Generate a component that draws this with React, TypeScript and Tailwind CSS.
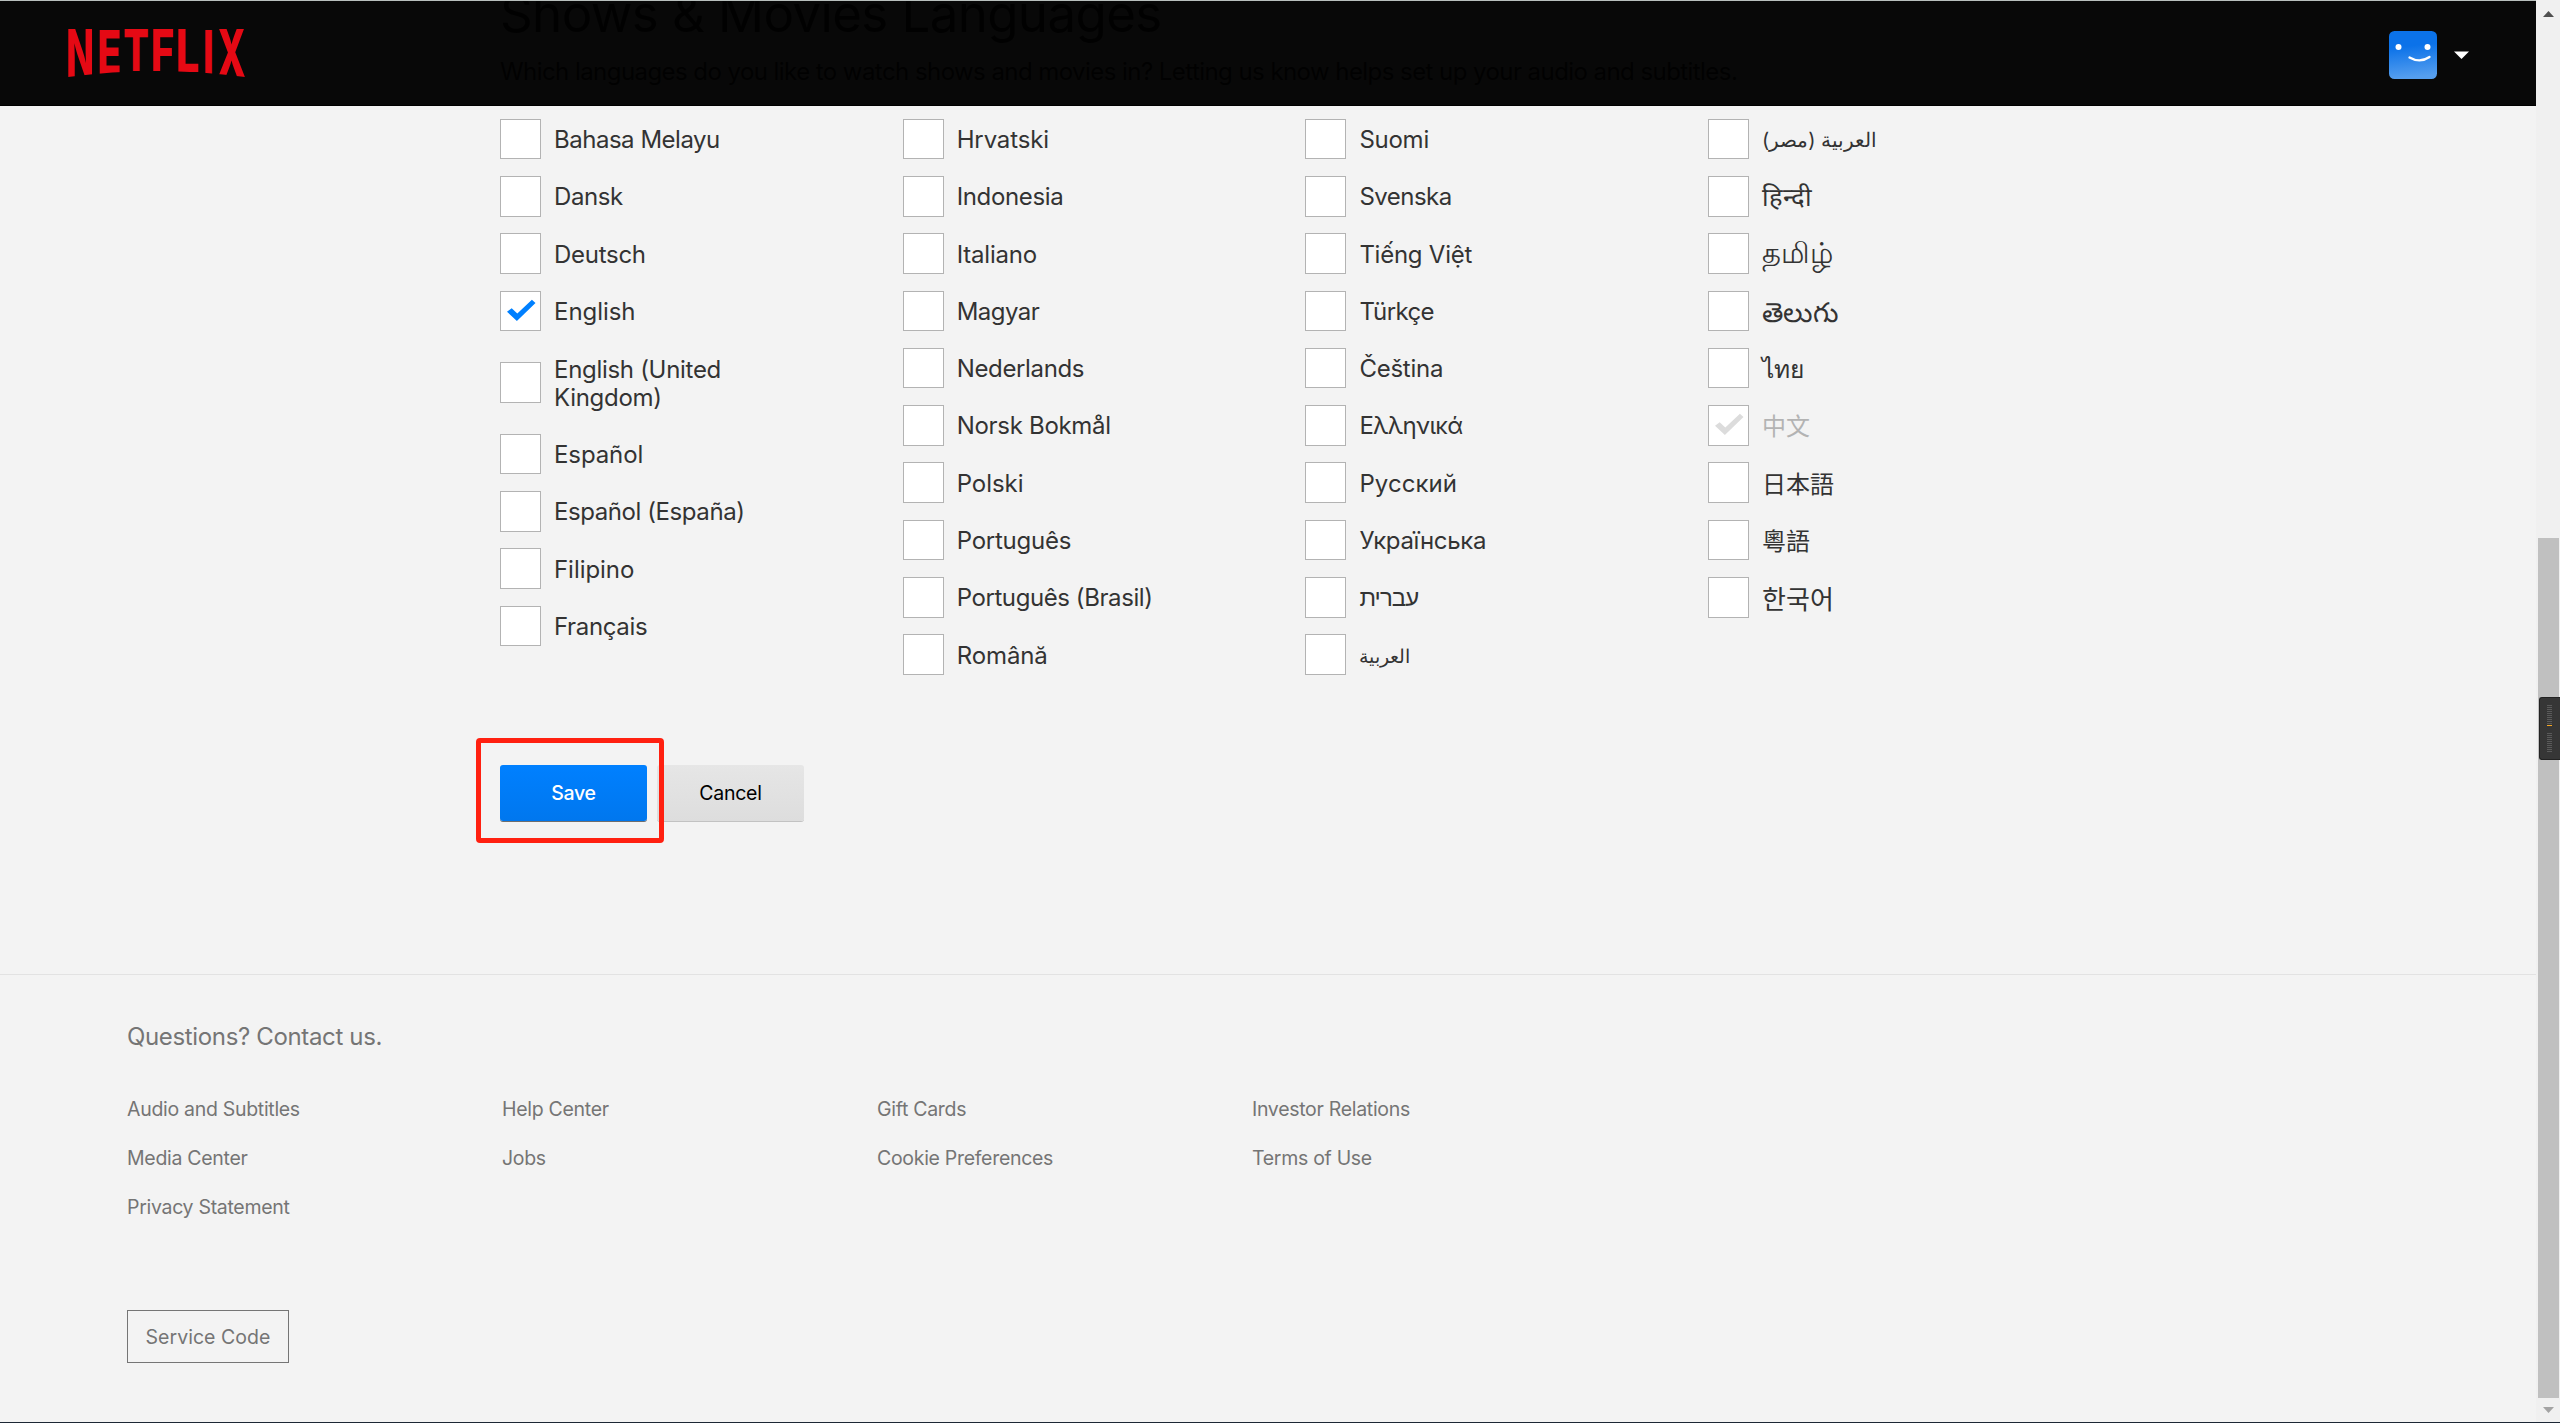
import React from 'react'

type Lang = { name: string; cls?: string; state?: 'checked' | 'disabled'; tall?: boolean; rtl?: boolean }

const columns: Lang[][] = [
  [
    { name: 'Bahasa Melayu', cls: 'tracking-[-0.48px]' },
    { name: 'Dansk', cls: 'tracking-[-0.4px]' },
    { name: 'Deutsch', cls: 'tracking-[-0.28px]' },
    { name: 'English', cls: 'tracking-[-0.05px]', state: 'checked' },
    { name: 'English (United Kingdom)', cls: 'tracking-[-0.3px]', tall: true },
    { name: 'Español', cls: 'tracking-[-0.1px]' },
    { name: 'Español (España)', cls: 'tracking-[-0.42px]' },
    { name: 'Filipino', cls: 'tracking-[-0.05px]' },
    { name: 'Français', cls: 'tracking-[-0.35px]' },
  ],
  [
    { name: 'Hrvatski', cls: 'tracking-[-0.15px]' },
    { name: 'Indonesia', cls: 'tracking-[-0.35px]' },
    { name: 'Italiano', cls: 'tracking-[-0.2px]' },
    { name: 'Magyar', cls: 'tracking-[-0.55px]' },
    { name: 'Nederlands', cls: 'tracking-[-0.35px]' },
    { name: 'Norsk Bokmål', cls: 'tracking-[-0.3px]' },
    { name: 'Polski', cls: 'tracking-[-0.05px]' },
    { name: 'Português', cls: 'tracking-[-0.25px]' },
    { name: 'Português (Brasil)', cls: 'tracking-[-0.42px]' },
    { name: 'Română', cls: 'tracking-[-0.1px]' },
  ],
  [
    { name: 'Suomi', cls: 'tracking-[-0.25px]' },
    { name: 'Svenska', cls: 'tracking-[-0.52px]' },
    { name: 'Tiếng Việt', cls: 'tracking-[-0.25px]' },
    { name: 'Türkçe', cls: 'tracking-[-0.6px]' },
    { name: 'Čeština', cls: 'tracking-[-0.25px]' },
    { name: 'Ελληνικά', cls: 'tracking-[-0.7px]' },
    { name: 'Русский', cls: 'tracking-[0.08px]' },
    { name: 'Українська', cls: 'tracking-[-0.33px]' },
    { name: 'עברית', cls: 'tracking-[-0.9px]', rtl: true },
    { name: 'العربية', cls: 'text-[18.5px]', rtl: true },
  ],
  [
    { name: 'العربية (مصر)', cls: 'text-[20px]', rtl: true },
    { name: 'हिन्दी', cls: 'text-[25.5px]' },
    { name: 'தமிழ்', cls: 'text-[28.5px] -mt-1' },
    { name: 'తెలుగు', cls: 'text-[27.5px]' },
    { name: 'ไทย', cls: 'text-[24.5px]' },
    { name: '中文', cls: 'mt-px', state: 'disabled' },
    { name: '日本語', cls: "font-['Noto_Sans_CJK_JP',sans-serif] -mt-px" },
    { name: '粵語', cls: "font-['Noto_Sans_CJK_TC',sans-serif] -mt-px" },
    { name: '한국어', cls: "font-['Noto_Sans_CJK_KR',sans-serif] text-[26px]" },
  ],
]

const footerLinks = [
  ['Audio and Subtitles', 'Media Center', 'Privacy Statement'],
  ['Help Center', 'Jobs'],
  ['Gift Cards', 'Cookie Preferences'],
  ['Investor Relations', 'Terms of Use'],
]

function LanguageRow({ lang }: { lang: Lang }) {
  const off = lang.state === 'disabled'
  return (
    <label className={`flex items-center ${lang.tall ? 'h-[86px]' : 'h-[57.27px]'}`}>
      <span className="h-[40.5px] w-[41px] shrink-0 border border-[#b3b3b3] bg-white">
        {lang.state && (
          <svg viewBox="1 1 39 38.5" className={`h-full w-full ${off ? 'fill-[#dcdcdc]' : 'fill-[#0080ff]'}`}>
            <polygon points="7,20.7 11.7,17.3 17.3,22.6 31.9,8.7 35.5,11.9 16.9,30" />
          </svg>
        )}
      </span>
      <span
        dir={lang.rtl ? 'rtl' : undefined}
        className={`ml-[13px] pt-0.5 ${lang.tall ? 'w-[200px]' : 'whitespace-nowrap'} leading-7 ${off ? 'text-[#b3b3b3]' : 'text-[#333]'} ${lang.cls ?? ''}`}
      >
        {lang.name}
      </span>
    </label>
  )
}

/* Each letter: glyph, left edge, ink width, height */
const logoLetters: [string, number, number, number][] = [
  ['N', 0, 24, 48],
  ['E', 31.5, 20.5, 44.5],
  ['T', 56.5, 23.5, 42.4],
  ['F', 85, 20.5, 42.2],
  ['L', 110, 20.5, 43],
  ['I', 137, 6.8, 44.5],
  ['X', 150, 27, 48],
]

function Logo() {
  const ctx = document.createElement('canvas').getContext('2d')!
  ctx.font = '800 100px Inter'
  return (
    <svg width="177" height="48" viewBox="0 0 177 48" className="fill-[#e50914] font-['Inter',sans-serif] text-[100px] font-extrabold">
      <clipPath id="arc">
        <path d="M0 0H177V48Q88.500 36 0 48Z" />
      </clipPath>
      <g clipPath="url(#arc)">
        {logoLetters.map(([ch, x, w, h]) => {
          const m = ctx.measureText(ch)
          const sx = w / (m.actualBoundingBoxLeft + m.actualBoundingBoxRight)
          const sy = h / m.actualBoundingBoxAscent
          return (
            <text key={ch} transform={`translate(${x + m.actualBoundingBoxLeft * sx} ${h}) scale(${sx} ${sy})`}>
              {ch}
            </text>
          )
        })}
      </g>
    </svg>
  )
}

function Header() {
  return (
    <header className="absolute left-0 top-0 flex h-[106px] w-[2536px] items-start justify-between border-b border-t border-b-black border-t-[#b8bfbd] bg-black/97 bg-clip-padding pl-[68px]">
      <div className="pt-7">
        <Logo />
      </div>
      <div className="mr-[67px] mt-[30px] flex items-center gap-[17px]">
        <svg width="48" height="48" viewBox="0 0 48 48">
          <defs>
            <linearGradient id="face" x1="0" y1="0" x2="0.1" y2="1">
              <stop offset="0.35" stopColor="#0b72e9" />
              <stop offset="1" stopColor="#559eee" />
            </linearGradient>
          </defs>
          <rect width="48" height="48" rx="5.500" fill="url(#face)" />
          <circle cx="9.500" cy="16" r="3" fill="#fff" />
          <circle cx="38.500" cy="16" r="3" fill="#fff" />
          <path d="M20.500 26.500Q31 32.500 40.500 26" fill="none" stroke="#fff" strokeWidth="2.300" strokeLinecap="round" />
        </svg>
        <svg width="15" height="8" viewBox="0 0 15 8" className="fill-white">
          <path d="M0 0.500H15L7.500 8Z" />
        </svg>
      </div>
    </header>
  )
}

function Scrollbar() {
  return (
    <div className="relative flex w-6 shrink-0 flex-col items-center bg-[#f0f0f0] pt-[11px]">
      <svg width="11" height="6" className="fill-[#505050]">
        <path d="M0 6L5.500 0L11 6Z" />
      </svg>
      <div className="mt-[521px] h-[860px] w-[21px] bg-[#c0c0c0]" />
      <svg width="11" height="6" className="mt-[9px] fill-[#a3a3a3]">
        <path d="M0 0H11L5.500 6Z" />
      </svg>
      <div className="absolute right-0 top-[697px] flex h-[63px] w-[21px] flex-col items-center gap-px rounded-l-[3px] border border-r-0 border-[#222] bg-[#363636] pr-px pt-[7px]">
        {Array.from({ length: 10 }, (_, i) => (
          <i key={i} className="h-px w-[5px] bg-[#5a5a5a]" />
        ))}
        <i className="h-px w-[5px] bg-[#f5a623]" />
        <i className="h-[5px]" />
        {Array.from({ length: 10 }, (_, i) => (
          <i key={i} className="h-px w-[5px] bg-[#5a5a5a]" />
        ))}
      </div>
    </div>
  )
}

export default function App() {
  return (
    <div className="relative flex h-[1423px] w-[2560px] overflow-hidden border-b border-[#1c2735] bg-[#f3f3f3] font-['Inter','Noto_Sans_CJK_SC',sans-serif] text-[24px]">
      <div className="w-[2536px] shrink-0">
        <main className="ml-[500px] flow-root h-[974px] text-[#333]">
          <h1 className="-mt-4 h-[74px] whitespace-nowrap text-[51px] leading-[60px] tracking-[-0.6px]">Shows &amp; Movies Languages</h1>
          <p className="h-[52.500px] whitespace-nowrap leading-7 tracking-[-0.56px]">
            Which languages do you like to watch shows and movies in? Letting us know helps set up your audio and subtitles.
          </p>
          <div className="flex">
            {columns.map((col, i) => (
              <div key={i} className="w-[402.700px] shrink-0">
                {col.map((l) => (
                  <LanguageRow key={l.name} lang={l} />
                ))}
              </div>
            ))}
          </div>
          <div className="relative mt-[81.800px] flex gap-2.5 text-[19.5px] tracking-[-0.25px]">
            <button className="h-14 w-[147px] rounded-[3px] bg-linear-to-b from-[#0080ff] to-[#0077ee] pt-px font-medium text-white shadow-[0_1px_0_rgba(0,0,0,0.55)]">Save</button>
            <button className="h-14 w-[147px] rounded-[3px] bg-linear-to-b from-[#e6e6e6] to-[#dddddd] pt-px text-black shadow-[0_1px_0_rgba(0,0,0,0.2)]">Cancel</button>
            <div className="absolute -left-6 -top-[27px] h-[105px] w-[188px] rounded-[4px] border-5 border-[#ff2010]" />
          </div>
        </main>
        <footer className="border-t border-[#e2e2e2] pl-[127px] pt-12 text-[#757575]">
          <p className="leading-7 tracking-[-0.35px]">Questions? Contact us.</p>
          <div className="mt-[34px] flex text-[19.5px] tracking-[-0.3px]">
            {footerLinks.map((col) => (
              <div key={col[0]} className="w-[375px]">
                {col.map((t) => (
                  <a key={t} className="block h-[49px] leading-[49px]">{t}</a>
                ))}
              </div>
            ))}
          </div>
          <button className="mt-[78px] h-[53px] w-[162px] border border-[#757575] pt-0.5 text-[19.5px] tracking-[0.05px]">Service Code</button>
        </footer>
      </div>
      <Scrollbar />
      <Header />
    </div>
  )
}
